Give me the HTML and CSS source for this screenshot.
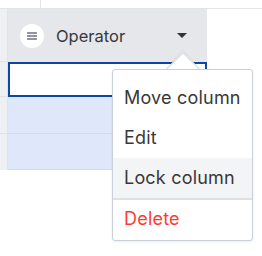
FILE: index.html
```html
<!DOCTYPE html>
<html lang="en">
<head>
  <meta charset="UTF-8" />
  <title>Column menu</title>
  <link rel="stylesheet" href="styles.css">
</head>
<body>
  <div class="sheet">
    <div class="top-row">
      <div class="top-cell"></div>
    </div>

    <div class="row">
      <div class="gutter"></div>
      <div class="col-header">
        <span class="drag-handle">
          <svg width="10" height="8" viewBox="0 0 10 8">
            <path d="M0 1h10M0 4h10M0 7h10" stroke="#6b7280" stroke-width="1.3" fill="none"/>
          </svg>
        </span>
        <span class="col-title">Operator</span>
        <span class="caret"></span>
      </div>
    </div>

    <div class="row">
      <div class="gutter"></div>
      <div class="cell selected"></div>
    </div>
    <div class="row">
      <div class="gutter"></div>
      <div class="cell filled"></div>
    </div>
    <div class="row">
      <div class="gutter last"></div>
      <div class="cell filled last"></div>
    </div>
  </div>

  <!-- column menu -->
  <div class="menu">
    <div class="menu-arrow"></div>
    <div class="menu-body">
      <div class="menu-item">Move column</div>
      <div class="menu-item">Edit</div>
      <div class="menu-item active">Lock column</div>
      <div class="menu-sep"></div>
      <div class="menu-item danger">Delete</div>
    </div>
  </div>
</body>
</html>
```

FILE: styles.css
```css
body {
  margin: 0;
  font-family: 'Inter', 'Noto Sans', sans-serif;
  background: #fff;
  color: #333;
}

.sheet {
  width: 262px;
}

.top-row {
  height: 8px;
  border-bottom: 1px solid #e2e4e8;
}

.top-cell {
  width: 40px;
  height: 8px;
  border-right: 1px solid #e2e4e8;
}

.row {
  display: flex;
  width: 207px;
}

.gutter {
  width: 7px;
  background: #eef0f3;
  border-right: 1px solid #e0e3e7;
  border-bottom: 1px solid #e0e3e7;
}

.gutter.last,
.cell.last {
  border-bottom: none;
}

.col-header {
  flex: 1;
  height: 53px;
  background: #e5e7eb;
  display: flex;
  align-items: center;
  padding-left: 12px;
}

.drag-handle {
  width: 24px;
  height: 24px;
  border-radius: 50%;
  background: #fff;
  display: flex;
  align-items: center;
  justify-content: center;
  margin-top: 1px;
}

.col-title {
  margin-left: 12px;
  font-size: 16.5px;
  color: #383838;
  flex: 1;
}

.caret {
  width: 0;
  height: 0;
  border-left: 5px solid transparent;
  border-right: 5px solid transparent;
  border-top: 5px solid #333;
  margin-right: 20px;
}

.cell {
  flex: 1;
  box-sizing: border-box;
}

.cell.selected {
  height: 35px;
  border: 2px solid #0d47a1;
  background: #fff;
}

.cell.filled {
  height: 37px;
  background: #dfe8fb;
  border-bottom: 1px solid #d3dbe8;
}

.cell.filled.last {
  height: 36px;
}

/* Column menu */
.menu {
  position: absolute;
  left: 112px;
  top: 69px;
  width: 141px;
}

.menu-arrow {
  position: absolute;
  left: 59px;
  top: -12px;
  width: 22px;
  height: 22px;
  background: #fff;
  border: 1px solid #d4d9e0;
  transform: rotate(45deg);
  box-shadow: -1px -1px 2px rgba(0,0,0,0.05);
}

.menu-body {
  position: relative;
  background: #fff;
  border: 1px solid #c9d0da;
  border-radius: 3px;
  padding: 8px 0 2px;
  box-shadow: 0 1px 3px rgba(0,0,0,0.08);
}

.menu-item {
  height: 40px;
  line-height: 40px;
  padding-left: 11px;
  font-size: 18px;
  letter-spacing: 0.2px;
  color: #383838;
}

.menu-item.active {
  background: #f3f4f6;
}

.menu-sep {
  height: 2px;
  background: #dde1e7;
}

.menu-item.danger {
  height: 38px;
  line-height: 38px;
  color: #ff3b30;
}
```
